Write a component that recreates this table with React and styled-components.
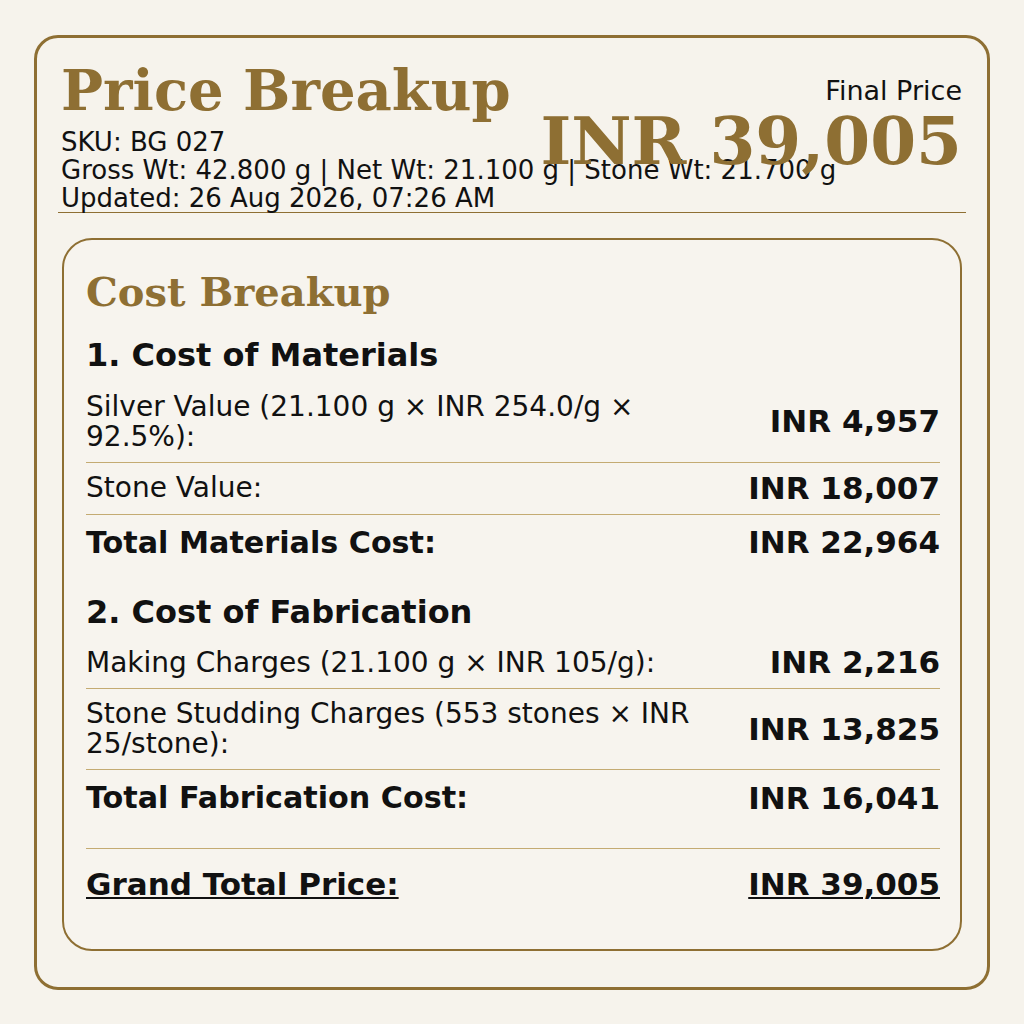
import React from 'react';
import styled, { createGlobalStyle } from 'styled-components';

const Gold = '#8e6f33';
const Rule = '#c4ab72';
const Paper = '#f6f3ec';

const GlobalStyle = createGlobalStyle`
    html, body {
        margin: 0;
        padding: 0;
        background: ${Paper};
    }
    body {
        font-family: "DejaVu Sans", "Liberation Sans", sans-serif;
        color: #111;
    }
`;

const Page = styled.div`
    width: 1024px;
    height: 1024px;
    box-sizing: border-box;
    padding: 35px 34px;
`;

const Card = styled.div`
    box-sizing: border-box;
    height: 955px;
    border: 3px solid ${Gold};
    border-radius: 24px;
    padding: 21px 21px 0;
`;

const Header = styled.header`
    display: flex;
    justify-content: space-between;
    align-items: flex-start;
    padding: 1px 4px 0 3px;
    border-bottom: 1px solid ${Gold};
`;

const Identity = styled.div`
    min-width: 0;
    white-space: nowrap;
`;

const Title = styled.h1`
    margin: 0 0 6px;
    font-family: "DejaVu Serif", "Liberation Serif", serif;
    font-weight: bold;
    font-size: 56px;
    line-height: 1.1;
    color: ${Gold};
`;

const Meta = styled.div`
    font-size: 26px;
    line-height: 28px;
`;

const PriceBox = styled.div`
    flex-shrink: 0;
    text-align: right;
    padding-top: 17px;
`;

const PriceLabel = styled.div`
    font-size: 27px;
    line-height: 28px;
`;

const Price = styled.div`
    margin-top: 3px;
    font-family: "DejaVu Serif", "Liberation Serif", serif;
    font-weight: bold;
    font-size: 66px;
    line-height: 1;
    color: ${Gold};
`;

const Breakup = styled.section`
    margin: 25px 4px 0;
    border: 2px solid ${Gold};
    border-radius: 30px;
    padding: 24px 20px 26px 22px;
    background: #f7f4ee;
`;

const BreakupTitle = styled.h2`
    margin: 4px 0 20px;
    font-family: "DejaVu Serif", "Liberation Serif", serif;
    font-weight: bold;
    font-size: 40px;
    line-height: 1.2;
    color: ${Gold};
`;

const SectionTitle = styled.h3`
    margin: ${p => (p.$first ? '0' : '22px')} 0 ${p => (p.$first ? '8px' : '6px')};
    font-size: 32px;
    font-weight: bold;
    line-height: 1.2;
`;

const Row = styled.div`
    display: flex;
    justify-content: space-between;
    align-items: center;
    gap: 20px;
    padding: 10px 0;
    border-bottom: ${p => (p.$total ? 'none' : `1px solid ${Rule}`)};
`;

const Label = styled.span`
    font-size: ${p => (p.$total ? '30.2px' : '28px')};
    font-weight: ${p => (p.$total ? 'bold' : 'normal')};
    line-height: ${p => (p.$total ? '36px' : '30px')};
    max-width: 640px;
`;

const Value = styled.span`
    flex-shrink: 0;
    font-size: 31px;
    font-weight: bold;
    line-height: 31px;
`;

const GrandRow = styled.div`
    display: flex;
    justify-content: space-between;
    align-items: center;
    margin-top: 22px;
    padding: 17px 0 19px;
    border-top: 1px solid ${Rule};
    font-size: 31px;
    font-weight: bold;
    line-height: 1.2;

    span {
        text-decoration: underline;
        text-decoration-thickness: 2px;
        text-underline-offset: 2px;
    }
`;

const materials = [
    { label: 'Silver Value (21.100 g × INR 254.0/g × 92.5%):', value: 'INR 4,957' },
    { label: 'Stone Value:', value: 'INR 18,007' },
];

const fabrication = [
    { label: 'Making Charges (21.100 g × INR 105/g):', value: 'INR 2,216' },
    { label: 'Stone Studding Charges (553 stones × INR 25/stone):', value: 'INR 13,825' },
];

const Lines = ({ items, total }) => (
    <>
        {items.map(item => (
            <Row key={item.label}>
                <Label>{item.label}</Label>
                <Value>{item.value}</Value>
            </Row>
        ))}
        <Row $total>
            <Label $total>{total.label}</Label>
            <Value>{total.value}</Value>
        </Row>
    </>
);

const App = () => {
    return (
        <Page>
            <GlobalStyle />
            <Card>
                <Header>
                    <Identity>
                        <Title>Price Breakup</Title>
                        <Meta>SKU: BG 027</Meta>
                        <Meta>Gross Wt: 42.800 g | Net Wt: 21.100 g | Stone Wt: 21.700 g</Meta>
                        <Meta>Updated: 26 Aug 2026, 07:26 AM</Meta>
                    </Identity>
                    <PriceBox>
                        <PriceLabel>Final Price</PriceLabel>
                        <Price>INR 39,005</Price>
                    </PriceBox>
                </Header>

                <Breakup>
                    <BreakupTitle>Cost Breakup</BreakupTitle>

                    <SectionTitle $first>1. Cost of Materials</SectionTitle>
                    <Lines items={materials} total={{ label: 'Total Materials Cost:', value: 'INR 22,964' }} />

                    <SectionTitle>2. Cost of Fabrication</SectionTitle>
                    <Lines items={fabrication} total={{ label: 'Total Fabrication Cost:', value: 'INR 16,041' }} />

                    <GrandRow>
                        <span>Grand Total Price:</span>
                        <span>INR 39,005</span>
                    </GrandRow>
                </Breakup>
            </Card>
        </Page>
    );
};

export default App;
